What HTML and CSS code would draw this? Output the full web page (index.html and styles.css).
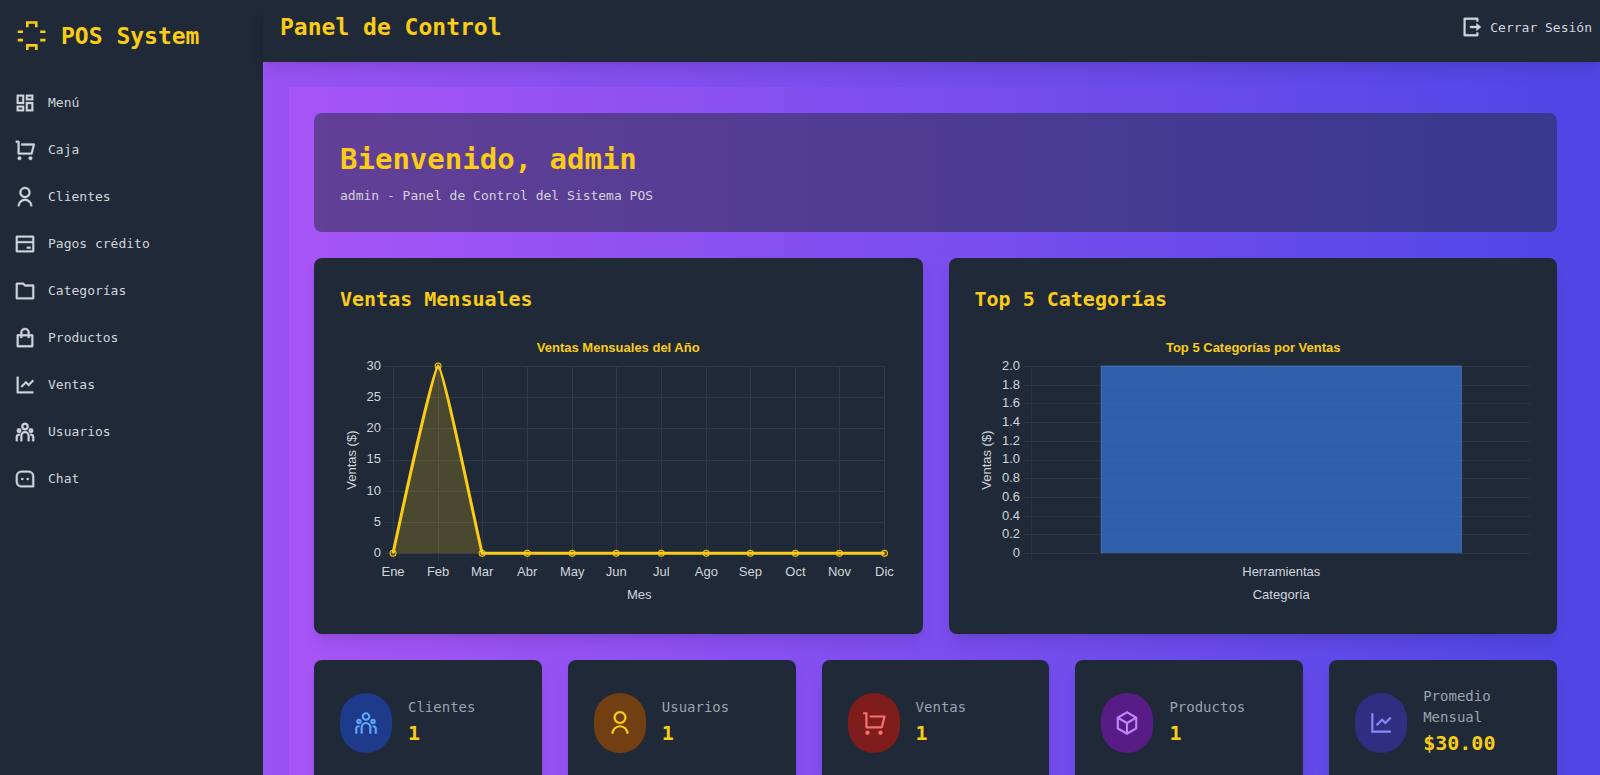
FILE: index.html
```html
<!DOCTYPE html>
<html lang="es">
<head>
<meta charset="utf-8">
<meta name="viewport" content="width=device-width, initial-scale=1">
<title>Panel de Control - POS System</title>
<link rel="stylesheet" href="styles.css">
</head>
<body>
<svg class="sprite" aria-hidden="true">
  <symbol id="i-menu" viewBox="0 0 24 24"><path d="M13 21V11h8v10h-8zM3 13V3h8v10H3zm6-2V5H5v6h4zM3 21v-6h8v6H3zm2-2h4v-2H5v2zm10 0h4v-6h-4v6zM13 3h8v6h-8V3zm2 2v2h4V5h-4z"/></symbol>
  <symbol id="i-cart" viewBox="0 0 24 24"><path d="M4 16V4H2V2h3a1 1 0 0 1 1 1v12h12.438l2-8H8V5h13.72a1 1 0 0 1 .97 1.243l-2.5 10a1 1 0 0 1-.97.757H5a1 1 0 0 1-1-1zm2 7a2 2 0 1 1 0-4 2 2 0 0 1 0 4zm12 0a2 2 0 1 1 0-4 2 2 0 0 1 0 4z"/></symbol>
  <symbol id="i-user" viewBox="0 0 24 24"><path d="M4 22a8 8 0 1 1 16 0h-2a6 6 0 1 0-12 0H4zm8-9c-3.315 0-6-2.685-6-6s2.685-6 6-6 6 2.685 6 6-2.685 6-6 6zm0-2c2.21 0 4-1.79 4-4s-1.79-4-4-4-4 1.79-4 4 1.79 4 4 4z"/></symbol>
  <symbol id="i-card" viewBox="0 0 24 24"><path d="M3 3h18a1 1 0 0 1 1 1v16a1 1 0 0 1-1 1H3a1 1 0 0 1-1-1V4a1 1 0 0 1 1-1zm17 8H4v8h16v-8zm0-2V5H4v4h16zm-6 6h4v2h-4v-2z"/></symbol>
  <symbol id="i-folder" viewBox="0 0 24 24"><path d="M4 5v14h16V7h-8.414l-2-2H4zm8.414 0H21a1 1 0 0 1 1 1v14a1 1 0 0 1-1 1H3a1 1 0 0 1-1-1V4a1 1 0 0 1 1-1h7.414l2 2z"/></symbol>
  <symbol id="i-bag" viewBox="0 0 24 24"><path d="M7 8V6a5 5 0 1 1 10 0v2h3a1 1 0 0 1 1 1v12a1 1 0 0 1-1 1H4a1 1 0 0 1-1-1V9a1 1 0 0 1 1-1h3zm0 2H5v10h14V10h-2v2h-2v-2H9v2H7v-2zm2-2h6V6a3 3 0 0 0-6 0v2z"/></symbol>
  <symbol id="i-chart" viewBox="0 0 24 24"><path d="M5 3v16h16v2H3V3h2zm15.293 3.293l1.414 1.414L16 13.414l-3-2.999-4.293 4.292-1.414-1.414L13 7.586l3 2.999 4.293-4.292z"/></symbol>
  <symbol id="i-team" viewBox="0 0 24 24"><path d="M12 11a5 5 0 0 1 5 5v6h-2v-6a3 3 0 0 0-2.824-2.995L12 13a3 3 0 0 0-2.995 2.824L9 16v6H7v-6a5 5 0 0 1 5-5zm-6.5 3c.279 0 .55.033.81.094a5.947 5.947 0 0 0-.301 1.575L6 16v.086a1.492 1.492 0 0 0-.356-.08L5.5 16a1.5 1.5 0 0 0-1.493 1.356L4 17.5V22H2v-4.5A3.5 3.5 0 0 1 5.5 14zm13 0a3.5 3.5 0 0 1 3.5 3.5V22h-2v-4.5a1.5 1.5 0 0 0-1.356-1.493L18.5 16c-.175 0-.343.03-.5.085V16c0-.666-.108-1.306-.309-1.904.259-.063.53-.096.809-.096zm-13-6a2.5 2.5 0 1 1 0 5 2.5 2.5 0 0 1 0-5zm13 0a2.5 2.5 0 1 1 0 5 2.5 2.5 0 0 1 0-5zm-13 2a.5.5 0 1 0 0 1 .5.5 0 0 0 0-1zm13 0a.5.5 0 1 0 0 1 .5.5 0 0 0 0-1zM12 2a4 4 0 1 1 0 8 4 4 0 0 1 0-8zm0 2a2 2 0 1 0 0 4 2 2 0 0 0 0-4z"/></symbol>
  <symbol id="i-chat" viewBox="0 0 24 24"><path d="M2 8.994A5.99 5.99 0 0 1 8 3h8c3.313 0 6 2.695 6 5.994V21H8c-3.313 0-6-2.695-6-5.994V8.994zM20 19V8.994A4.004 4.004 0 0 0 16 5H8a3.99 3.99 0 0 0-4 3.994v6.012A4.004 4.004 0 0 0 8 19h12zm-6-8h2v2h-2v-2zm-6 0h2v2H8v-2z"/></symbol>
  <symbol id="i-logout" viewBox="0 0 24 24"><path d="M5 22a1 1 0 0 1-1-1V3a1 1 0 0 1 1-1h14a1 1 0 0 1 1 1v3h-2V4H6v16h12v-2h2v3a1 1 0 0 1-1 1H5zm13-6v-3h-7v-2h7V8l5 4-5 4z"/></symbol>
  <symbol id="i-box" viewBox="0 0 24 24"><path d="M12 1l9.500 5.500v11L12 23l-9.500-5.500v-11L12 1zM5.494 7.078L12 10.844l6.506-3.766L12 3.311 5.494 7.078zM4.500 8.813v7.534L11 20.110v-7.533L4.500 8.813zM13 20.110l6.500-3.763V8.813L13 12.577v7.533z"/></symbol>
</svg>

<aside class="sidebar">
  <div class="brand">
    <svg class="brand-logo" viewBox="0 0 32 32" aria-hidden="true"><path d="M11.300 7.300V2.500h9v4.800M11.300 30v-4.600h9V30M1.700 11.700H7M1.700 20.100H7M24.200 11.700h5.300M24.200 20.100h5.300"/></svg>
    <span>POS System</span>
  </div>
  <nav class="nav">
    <a class="nav-link" href="#menu"><svg class="icon"><use href="#i-menu"/></svg>Menú</a>
    <a class="nav-link" href="#caja"><svg class="icon"><use href="#i-cart"/></svg>Caja</a>
    <a class="nav-link" href="#clientes"><svg class="icon"><use href="#i-user"/></svg>Clientes</a>
    <a class="nav-link" href="#pagos"><svg class="icon"><use href="#i-card"/></svg>Pagos crédito</a>
    <a class="nav-link" href="#categorias"><svg class="icon"><use href="#i-folder"/></svg>Categorías</a>
    <a class="nav-link" href="#productos"><svg class="icon"><use href="#i-bag"/></svg>Productos</a>
    <a class="nav-link" href="#ventas"><svg class="icon"><use href="#i-chart"/></svg>Ventas</a>
    <a class="nav-link" href="#usuarios"><svg class="icon"><use href="#i-team"/></svg>Usuarios</a>
    <a class="nav-link" href="#chat"><svg class="icon"><use href="#i-chat"/></svg>Chat</a>
  </nav>
</aside>

<div class="page">
  <header class="topbar">
    <h1 class="topbar-title">Panel de Control</h1>
    <a class="logout" href="#salir"><svg class="icon"><use href="#i-logout"/></svg>Cerrar Sesión</a>
  </header>

  <main class="main">
    <div class="dashboard">
      <section class="welcome">
        <h2 class="welcome-title">Bienvenido, admin</h2>
        <p class="welcome-text">admin - Panel de Control del Sistema POS</p>
      </section>

      <div class="charts">
        <section class="card">
          <h3 class="card-title">Ventas Mensuales</h3>
          <svg class="chart" viewBox="0 0 556 279" role="img" aria-label="Ventas Mensuales del Año">
            <path class="grid" d="M45 37H545M45 68H545M45 99H545M45 131H545M45 162H545M45 193H545M45 224H545M53 37V232M98 37V232M142 37V232M187 37V232M232 37V232M276 37V232M321 37V232M366 37V232M410 37V232M455 37V232M499 37V232M544 37V232"/>
            <path class="area" d="M53 224C53 224 93 37 98 37C103 37 138 209 142 224Z"/>
            <path class="line" d="M53 224C53 224 93 37 98 37C103 37 138 209 142 224H544"/>
            <g class="points">
              <circle cx="53" cy="224" r="3"/><circle cx="98" cy="37" r="3"/><circle cx="142" cy="224" r="3"/><circle cx="187" cy="224" r="3"/><circle cx="232" cy="224" r="3"/><circle cx="276" cy="224" r="3"/><circle cx="321" cy="224" r="3"/><circle cx="366" cy="224" r="3"/><circle cx="410" cy="224" r="3"/><circle cx="455" cy="224" r="3"/><circle cx="499" cy="224" r="3"/><circle cx="544" cy="224" r="3"/>
            </g>
            <text class="chart-title" x="278" y="23">Ventas Mensuales del Año</text>
            <g class="ticks-y">
              <text x="41" y="41">30</text><text x="41" y="72">25</text><text x="41" y="103">20</text><text x="41" y="134">15</text><text x="41" y="166">10</text><text x="41" y="197">5</text><text x="41" y="228">0</text>
            </g>
            <g class="ticks-x">
              <text x="53" y="247">Ene</text><text x="98" y="247">Feb</text><text x="142" y="247">Mar</text><text x="187" y="247">Abr</text><text x="232" y="247">May</text><text x="276" y="247">Jun</text><text x="321" y="247">Jul</text><text x="366" y="247">Ago</text><text x="410" y="247">Sep</text><text x="455" y="247">Oct</text><text x="499" y="247">Nov</text><text x="544" y="247">Dic</text>
              <text x="299" y="270">Mes</text>
              <text transform="translate(16 131) rotate(-90)">Ventas ($)</text>
            </g>
          </svg>
        </section>

        <section class="card">
          <h3 class="card-title">Top 5 Categorías</h3>
          <svg class="chart" viewBox="0 0 556 279" role="img" aria-label="Top 5 Categorías por Ventas">
            <path class="grid grid-soft" d="M49 37H556M49 56H556M49 74H556M49 93H556M49 112H556M49 131H556M49 149H556M49 168H556M49 187H556M49 205H556M49 224H556M56 37V232M556 37V232"/>
            <rect class="bar" x="126" y="37" width="360" height="187"/>
            <path class="bar-edge" d="M126 224V37H486V224"/>
            <text class="chart-title" x="278" y="23">Top 5 Categorías por Ventas</text>
            <g class="ticks-y">
              <text x="45" y="41">2.0</text><text x="45" y="60">1.8</text><text x="45" y="78">1.6</text><text x="45" y="97">1.4</text><text x="45" y="116">1.2</text><text x="45" y="134">1.0</text><text x="45" y="153">0.8</text><text x="45" y="172">0.6</text><text x="45" y="191">0.4</text><text x="45" y="209">0.2</text><text x="45" y="228">0</text>
            </g>
            <g class="ticks-x">
              <text x="306" y="247">Herramientas</text>
              <text x="306" y="270">Categoría</text>
              <text transform="translate(16 131) rotate(-90)">Ventas ($)</text>
            </g>
          </svg>
        </section>
      </div>

      <div class="stats">
        <section class="card stat">
          <span class="badge badge-blue"><svg class="badge-icon"><use href="#i-team"/></svg></span>
          <div><p class="stat-label">Clientes</p><p class="stat-value">1</p></div>
        </section>
        <section class="card stat">
          <span class="badge badge-yellow"><svg class="badge-icon"><use href="#i-user"/></svg></span>
          <div><p class="stat-label">Usuarios</p><p class="stat-value">1</p></div>
        </section>
        <section class="card stat">
          <span class="badge badge-red"><svg class="badge-icon"><use href="#i-cart"/></svg></span>
          <div><p class="stat-label">Ventas</p><p class="stat-value">1</p></div>
        </section>
        <section class="card stat">
          <span class="badge badge-purple"><svg class="badge-icon"><use href="#i-box"/></svg></span>
          <div><p class="stat-label">Productos</p><p class="stat-value">1</p></div>
        </section>
        <section class="card stat">
          <span class="badge badge-indigo"><svg class="badge-icon"><use href="#i-chart"/></svg></span>
          <div><p class="stat-label">Promedio Mensual</p><p class="stat-value">$30.00</p></div>
        </section>
      </div>
    </div>
  </main>
</div>
</body>
</html>
```
FILE: styles.css
```css
:root {
  --surface: #1f2937;
  --accent: #facc15;
  --text: #d1d5db;
  --muted: #9ca3af;
  --violet: #a855f7;
  --indigo: #4f46e5;
  --shadow: 0 10px 15px -3px rgba(0, 0, 0, 0.1), 0 4px 6px -4px rgba(0, 0, 0, 0.1);
}

* {
  box-sizing: border-box;
}

body {
  display: flex;
  height: 100vh;
  margin: 0;
  overflow: hidden;
  background: linear-gradient(to right, var(--violet), var(--indigo));
  color: var(--text);
  font-family: "DejaVu Sans Mono", monospace;
  font-size: 13px;
  line-height: 21px;
}

h1, h2, h3, p {
  margin: 0;
}

a {
  color: inherit;
  text-decoration: none;
}

.sprite {
  position: absolute;
  width: 0;
  height: 0;
}

.icon {
  width: 22px;
  height: 22px;
  fill: currentColor;
  stroke: currentColor;
  stroke-width: 0.4;
  flex: none;
}

.sidebar {
  width: 263px;
  flex: none;
  background: var(--surface);
}

.brand {
  display: flex;
  align-items: center;
  gap: 13px;
  height: 72px;
  padding: 0 16px;
  color: var(--accent);
  font-size: 23px;
  font-weight: bold;
}

.brand-logo {
  width: 32px;
  height: 32px;
  fill: none;
  stroke: currentColor;
  stroke-width: 2.6;
}

.nav {
  display: flex;
  flex-direction: column;
  padding-top: 7px;
}

.nav-link {
  display: flex;
  align-items: center;
  gap: 12px;
  height: 47px;
  padding: 0 14px;
}

.page {
  display: flex;
  flex: 1;
  flex-direction: column;
  min-width: 0;
}

.topbar {
  position: relative;
  z-index: 1;
  display: flex;
  align-items: flex-start;
  justify-content: space-between;
  height: 62px;
  flex: none;
  padding: 11px 8px 0 17px;
  background: var(--surface);
  box-shadow: var(--shadow);
}

.topbar-title {
  color: var(--accent);
  font-size: 23px;
  line-height: 32px;
}

.logout {
  display: flex;
  align-items: center;
  gap: 8px;
  height: 32px;
}

.main {
  flex: 1;
  min-height: 0;
  padding: 25px 17px 25px 26px;
  overflow-y: auto;
  scrollbar-width: none;
}

.dashboard {
  display: flex;
  flex-direction: column;
  gap: 26px;
  padding: 26px 26px 26px 25px;
  background: linear-gradient(to right, var(--violet), var(--indigo));
}

.welcome {
  padding: 26px;
  border-radius: 8px;
  background: rgba(31, 41, 55, 0.5);
}

.welcome-title {
  margin-bottom: 6px;
  color: var(--accent);
  font-size: 29px;
  line-height: 40px;
}

.charts {
  display: grid;
  grid-template-columns: repeat(2, minmax(0, 1fr));
  gap: 26px;
}

.stats {
  display: grid;
  grid-template-columns: repeat(5, minmax(0, 1fr));
  gap: 26px;
}

.card {
  padding: 26px;
  border-radius: 8px;
  background: var(--surface);
  box-shadow: var(--shadow);
}

.card-title {
  margin-bottom: 15px;
  color: var(--accent);
  font-size: 20px;
  line-height: 30px;
}

.chart {
  display: block;
  width: 100%;
  font-family: "Liberation Sans", Arial, sans-serif;
  font-size: 13px;
}

.grid {
  fill: none;
  stroke: rgba(255, 255, 255, 0.08);
  shape-rendering: crispEdges;
}

.grid-soft {
  stroke: rgba(255, 255, 255, 0.06);
}

.area {
  fill: var(--accent);
  fill-opacity: 0.2;
}

.line {
  fill: none;
  stroke: var(--accent);
  stroke-width: 3;
}

.points {
  fill: rgba(250, 204, 21, 0.2);
  stroke: var(--accent);
}

.bar {
  fill: #3b82f6;
  fill-opacity: 0.6;
}

.bar-edge {
  fill: none;
  stroke: rgba(96, 165, 250, 0.4);
}

.chart-title {
  fill: var(--accent);
  font-weight: bold;
  text-anchor: middle;
}

.ticks-y {
  fill: var(--text);
  text-anchor: end;
}

.ticks-x {
  fill: var(--text);
  text-anchor: middle;
}

.stat {
  display: flex;
  align-items: center;
  gap: 16px;
}

.badge {
  display: flex;
  align-items: center;
  justify-content: center;
  width: 52px;
  height: 60px;
  flex: none;
  border-radius: 26px;
}

.badge-icon {
  width: 26px;
  height: 26px;
  fill: currentColor;
}

.badge-blue {
  background: #1e3a8a;
  color: #60a5fa;
}

.badge-yellow {
  background: #713f12;
  color: #facc15;
}

.badge-red {
  background: #7f1d1d;
  color: #f87171;
}

.badge-purple {
  background: #581c87;
  color: #c084fc;
}

.badge-indigo {
  background: #312e81;
  color: #818cf8;
}

.stat-label {
  color: var(--muted);
  font-size: 14px;
}

.stat-value {
  color: var(--accent);
  font-size: 20px;
  font-weight: bold;
  line-height: 31px;
}

@media (max-width: 1000px) {
  .charts {
    grid-template-columns: minmax(0, 1fr);
  }

  .stats {
    grid-template-columns: repeat(2, minmax(0, 1fr));
  }
}
```
